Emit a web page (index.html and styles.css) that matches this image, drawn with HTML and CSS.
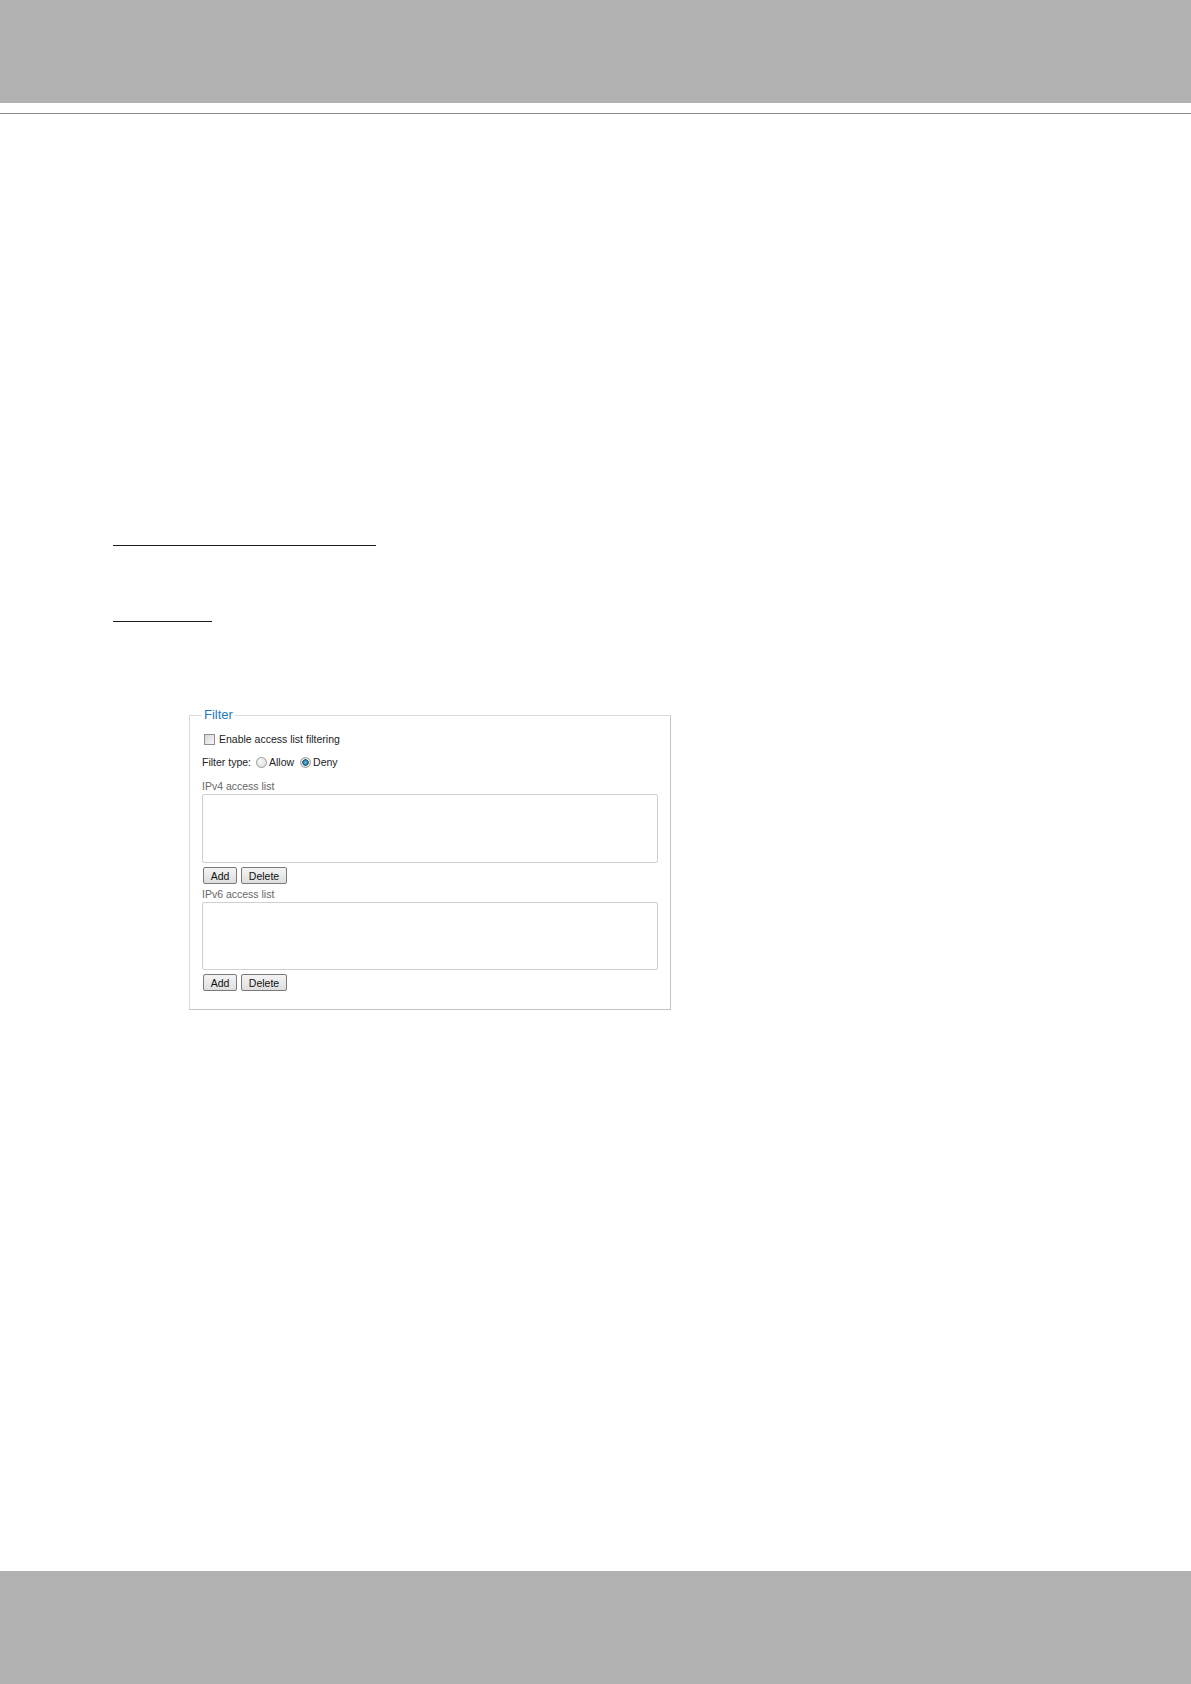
FILE: index.html
```html
<!DOCTYPE html>
<html lang="en">
<head>
    <meta charset="UTF-8">
    <meta name="viewport" content="width=device-width, initial-scale=1.0">
    <title>Access List</title>
    <link rel="stylesheet" href="styles.css">
</head>
<body>
    <div class="page">
        <header class="top-band"></header>
        <div class="top-rule"></div>

        <main class="content">
            <div class="underline underline-long"></div>
            <div class="underline underline-short"></div>

            <fieldset class="filter-box">
                <legend>Filter</legend>

                <label class="check-row">
                    <input type="checkbox" class="check">
                    <span>Enable access list filtering</span>
                </label>

                <div class="type-row">
                    <span>Filter type:</span>
                    <label class="radio-item">
                        <input type="radio" name="filterType" class="radio">
                        <span>Allow</span>
                    </label>
                    <label class="radio-item">
                        <input type="radio" name="filterType" class="radio" checked>
                        <span>Deny</span>
                    </label>
                </div>

                <div class="list-label">IPv4 access list</div>
                <select class="list-box" multiple></select>
                <div class="button-row">
                    <button type="button" class="btn btn-add">Add</button>
                    <button type="button" class="btn btn-delete">Delete</button>
                </div>

                <div class="list-label list-label-second">IPv6 access list</div>
                <select class="list-box list-box-second" multiple></select>
                <div class="button-row">
                    <button type="button" class="btn btn-add">Add</button>
                    <button type="button" class="btn btn-delete">Delete</button>
                </div>
            </fieldset>
        </main>

        <footer class="bottom-band"></footer>
    </div>
</body>
</html>
```

FILE: styles.css
```css
/* Basic reset */
* {
    box-sizing: border-box;
    margin: 0;
    padding: 0;
}

body {
    background-color: #fff;
    color: #333;
    font-family: "Liberation Sans", Arial, sans-serif;
}

.page {
    display: flex;
    flex-direction: column;
    min-height: 1684px;
}

.top-band {
    height: 103px;
    background-color: #b1b1b1;
}

.top-rule {
    height: 1px;
    margin-top: 10px;
    background-color: #8a8a8a;
}

.content {
    flex: 1;
    padding-left: 113px;
}

.underline {
    height: 1px;
    background-color: #1c1c1c;
}

.underline-long {
    width: 263px;
    margin-top: 431px;
}

.underline-short {
    width: 99px;
    margin-top: 75px;
}

/* Filter panel */
.filter-box {
    width: 482px;
    margin-top: 85px;
    margin-left: 76px;
    padding: 0 12px 18px 12px;
    border: 1px solid #dadada;
    border-right-color: #c4c4c4;
    border-bottom-color: #c4c4c4;
}

.filter-box legend {
    padding: 0 2px;
    font-size: 13px;
    line-height: 16px;
    color: #1f7bc0;
}

.check-row,
.type-row {
    display: flex;
    align-items: center;
    height: 20px;
    font-size: 10.5px;
    color: #222;
}

.check-row {
    margin-top: 6px;
}

.type-row {
    margin-top: 3px;
}

.check {
    appearance: none;
    width: 11px;
    height: 11px;
    margin: 0 4px 0 2px;
    border: 1px solid #8e8e8e;
    background: linear-gradient(135deg, #d8d8d8, #f6f6f6);
}

.radio-item {
    display: flex;
    align-items: center;
    margin-left: 5px;
}

.radio-item + .radio-item {
    margin-left: 6px;
}

.radio {
    appearance: none;
    width: 11px;
    height: 11px;
    margin-right: 2px;
    border: 1px solid #9a9a9a;
    border-radius: 50%;
    background: radial-gradient(circle at 40% 35%, #fbfbfb, #d6d6d6);
}

.radio:checked {
    background: radial-gradient(circle, #7fc4de 0, #2a7fa3 2px, #1f5f7e 3px, #e8e8e8 3.5px, #d0d0d0 100%);
}

.list-label {
    height: 14px;
    margin-top: 7px;
    font-size: 10.5px;
    line-height: 14px;
    color: #666;
}

.list-label-second {
    margin-top: 3px;
}

.list-box {
    display: block;
    width: 100%;
    height: 69px;
    margin-top: 1px;
    border: 1px solid #d0d0d0;
    background-color: #fff;
    outline: none;
}

.list-box-second {
    height: 68px;
}

.button-row {
    display: flex;
    gap: 4px;
    margin-top: 4px;
    padding-left: 1px;
}

.btn {
    height: 17px;
    font-family: "Liberation Sans", Arial, sans-serif;
    font-size: 10.5px;
    color: #111;
    border: 1px solid #7a7a7a;
    border-radius: 2px;
    background: linear-gradient(#f4f4f4, #dedede);
    cursor: pointer;
}

.btn-add {
    width: 34px;
}

.btn-delete {
    width: 46px;
}

.bottom-band {
    height: 113px;
    background-color: #b1b1b1;
}
```
